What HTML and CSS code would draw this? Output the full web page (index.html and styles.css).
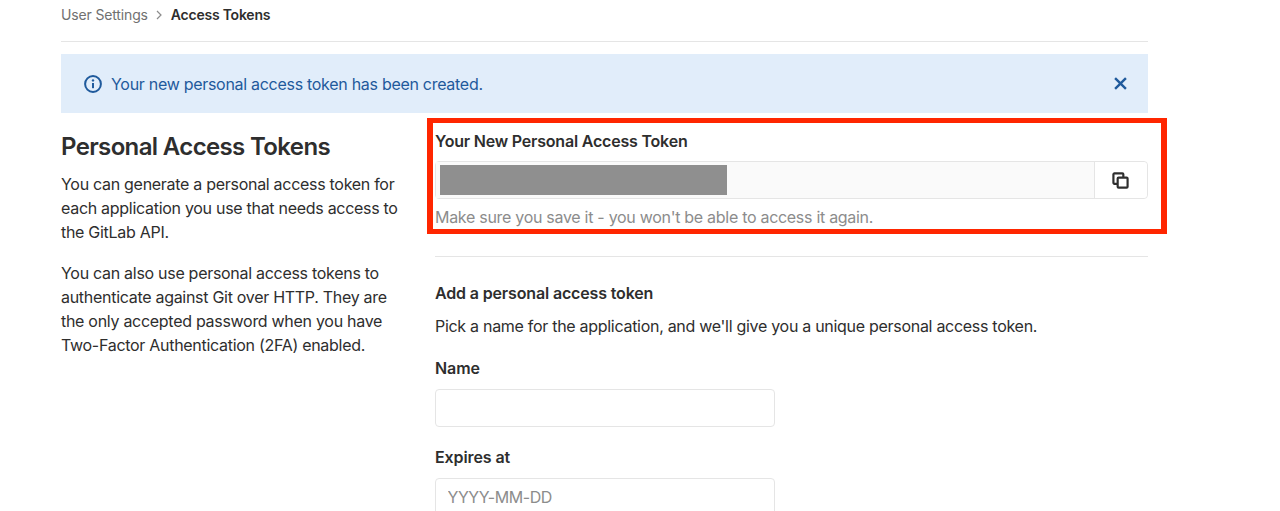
FILE: index.html

```html
<!DOCTYPE html>
<html lang="en">

<head>
    <meta charset="UTF-8">
    <title>Personal Access Tokens</title>
    <link rel="stylesheet" href="styles.css">
</head>

<body>
    <div class="page">
        <nav class="breadcrumbs">
            <span class="crumb">User Settings</span>
            <svg class="crumb-sep" width="6" height="10" viewBox="0 0 6 10"><path d="M1 1l4 4-4 4" fill="none" stroke="#8c8c8c" stroke-width="1.2"/></svg>
            <strong class="crumb-current">Access Tokens</strong>
        </nav>

        <div class="flash">
            <svg class="flash-icon" width="18" height="18" viewBox="0 0 18 18">
                <circle cx="9" cy="9" r="7.900" fill="none" stroke="#1f5a9c" stroke-width="2"/>
                <rect x="8" y="8" width="2" height="5.200" fill="#1f5a9c"/>
                <circle cx="9" cy="5.400" r="1.200" fill="#1f5a9c"/>
            </svg>
            <span class="flash-text">Your new personal access token has been created.</span>
            <svg class="flash-close" width="13" height="13" viewBox="0 0 12 12"><path d="M1 1l10 10M11 1L1 11" stroke="#1f5a9c" stroke-width="2.200" fill="none"/></svg>
        </div>

        <div class="row">
            <aside class="side">
                <h2>Personal Access Tokens</h2>
                <p>You can generate a personal access token for each application you use that needs access to the GitLab API.</p>
                <p>You can also use personal access tokens to authenticate against Git over HTTP. They are the only accepted password when you have Two-Factor Authentication (2FA) enabled.</p>
            </aside>

            <main class="content">
                <div class="new-token">
                    <h5>Your New Personal Access Token</h5>
                    <div class="token-group">
                        <div class="token-field"><div class="token-mask"></div></div>
                        <button class="copy-btn">
                            <svg width="17" height="17" viewBox="0 0 18 18" fill="none" stroke="#2e2e2e" stroke-width="2.300">
                                <path d="M5.500 12.500H2.500a1 1 0 0 1-1-1V2.500a1 1 0 0 1 1-1h8.500a1 1 0 0 1 1 1V5.500"/>
                                <rect x="6" y="6" width="10.500" height="10.500" rx="1"/>
                            </svg>
                        </button>
                    </div>
                    <p class="help">Make sure you save it - you won't be able to access it again.</p>
                </div>

                <hr class="divider">

                <h5 class="add-title">Add a personal access token</h5>
                <p class="add-desc">Pick a name for the application, and we'll give you a unique personal access token.</p>

                <label class="field-label">Name</label>
                <input class="field" type="text">

                <label class="field-label">Expires at</label>
                <input class="field" type="text" placeholder="YYYY-MM-DD">
            </main>
        </div>
    </div>

    <div class="annotation"></div>
</body>

</html>
```

FILE: styles.css

```css
html, body {
    margin: 0;
    height: 511px;
    overflow: hidden;
    background: #fff;
}

body {
    font-family: "Inter", "Liberation Sans", sans-serif;
    font-size: 16px;
    line-height: 24px;
    letter-spacing: -0.29px;
    color: #2e2e2e;
}

.page {
    width: 1087px;
    margin-left: 61px;
}

.breadcrumbs {
    display: flex;
    align-items: center;
    height: 29px;
    padding-bottom: 12px;
    border-bottom: 1px solid #e5e5e5;
    font-size: 14px;
    letter-spacing: -0.15px;
}

.crumb {
    color: #707070;
}

.crumb-sep {
    margin: 0 9px 0 8px;
}

.crumb-current {
    font-weight: 600;
    letter-spacing: -0.23px;
    color: #2e2e2e;
}

.flash {
    display: flex;
    align-items: center;
    height: 59px;
    margin-top: 12px;
    padding: 0 21px 0 23px;
    background: #e1edfa;
    color: #1f5a9c;
}

.flash-icon {
    margin-right: 9px;
}

.flash-text {
    flex: 1;
}

.row {
    display: flex;
}

.side {
    width: 374px;
    padding-right: 32px;
    box-sizing: border-box;
}

.side h2 {
    margin: 18px 0 9px;
    font-size: 24px;
    line-height: 32px;
    font-weight: 600;
    letter-spacing: -0.64px;
}

.side p {
    margin: 0 0 17px;
}

.content {
    flex: 1;
}

.new-token {
    padding-top: 16px;
}

h5 {
    margin: 0;
    font-size: 16px;
    line-height: 24px;
    font-weight: 600;
    letter-spacing: -0.2px;
}

.token-group {
    display: flex;
    height: 38px;
    margin-top: 8px;
    box-sizing: border-box;
    border: 1px solid #e5e5e5;
    border-radius: 4px;
}

.token-field {
    flex: 1;
    padding: 3px 4px;
    background: #fafafa;
    border-right: 1px solid #e5e5e5;
}

.token-mask {
    width: 287px;
    height: 30px;
    background: #8f8f8f;
}

.copy-btn {
    display: flex;
    align-items: center;
    justify-content: center;
    width: 52px;
    padding: 0 1px 0 0;
    border: 0;
    background: #fff;
    border-radius: 0 4px 4px 0;
}

.help {
    margin: 6px 0 0;
    color: #8c8c8c;
}

.divider {
    margin: 27px 0 0;
    border: 0;
    border-top: 1px solid #e5e5e5;
}

.add-title {
    margin-top: 24px;
    letter-spacing: -0.15px;
}

.add-desc {
    margin: 9px 0 0;
}

.field-label {
    display: block;
    margin-top: 18px;
    font-weight: 600;
    letter-spacing: -0.1px;
}

.field {
    display: block;
    width: 340px;
    height: 38px;
    margin: 9px 0 0;
    padding: 0 12px 0 11.500px;
    box-sizing: border-box;
    border: 1px solid #e5e5e5;
    border-radius: 4px;
    font: inherit;
    letter-spacing: -0.45px;
    outline: none;
}

.field::placeholder {
    color: #8c8c8c;
    opacity: 1;
}

.field + .field-label {
    margin-top: 18px;
}

.annotation {
    position: absolute;
    left: 427px;
    top: 118px;
    width: 740px;
    height: 116px;
    box-sizing: border-box;
    border-style: solid;
    border-color: #ff2600;
    border-width: 5px 6px;
}
```
